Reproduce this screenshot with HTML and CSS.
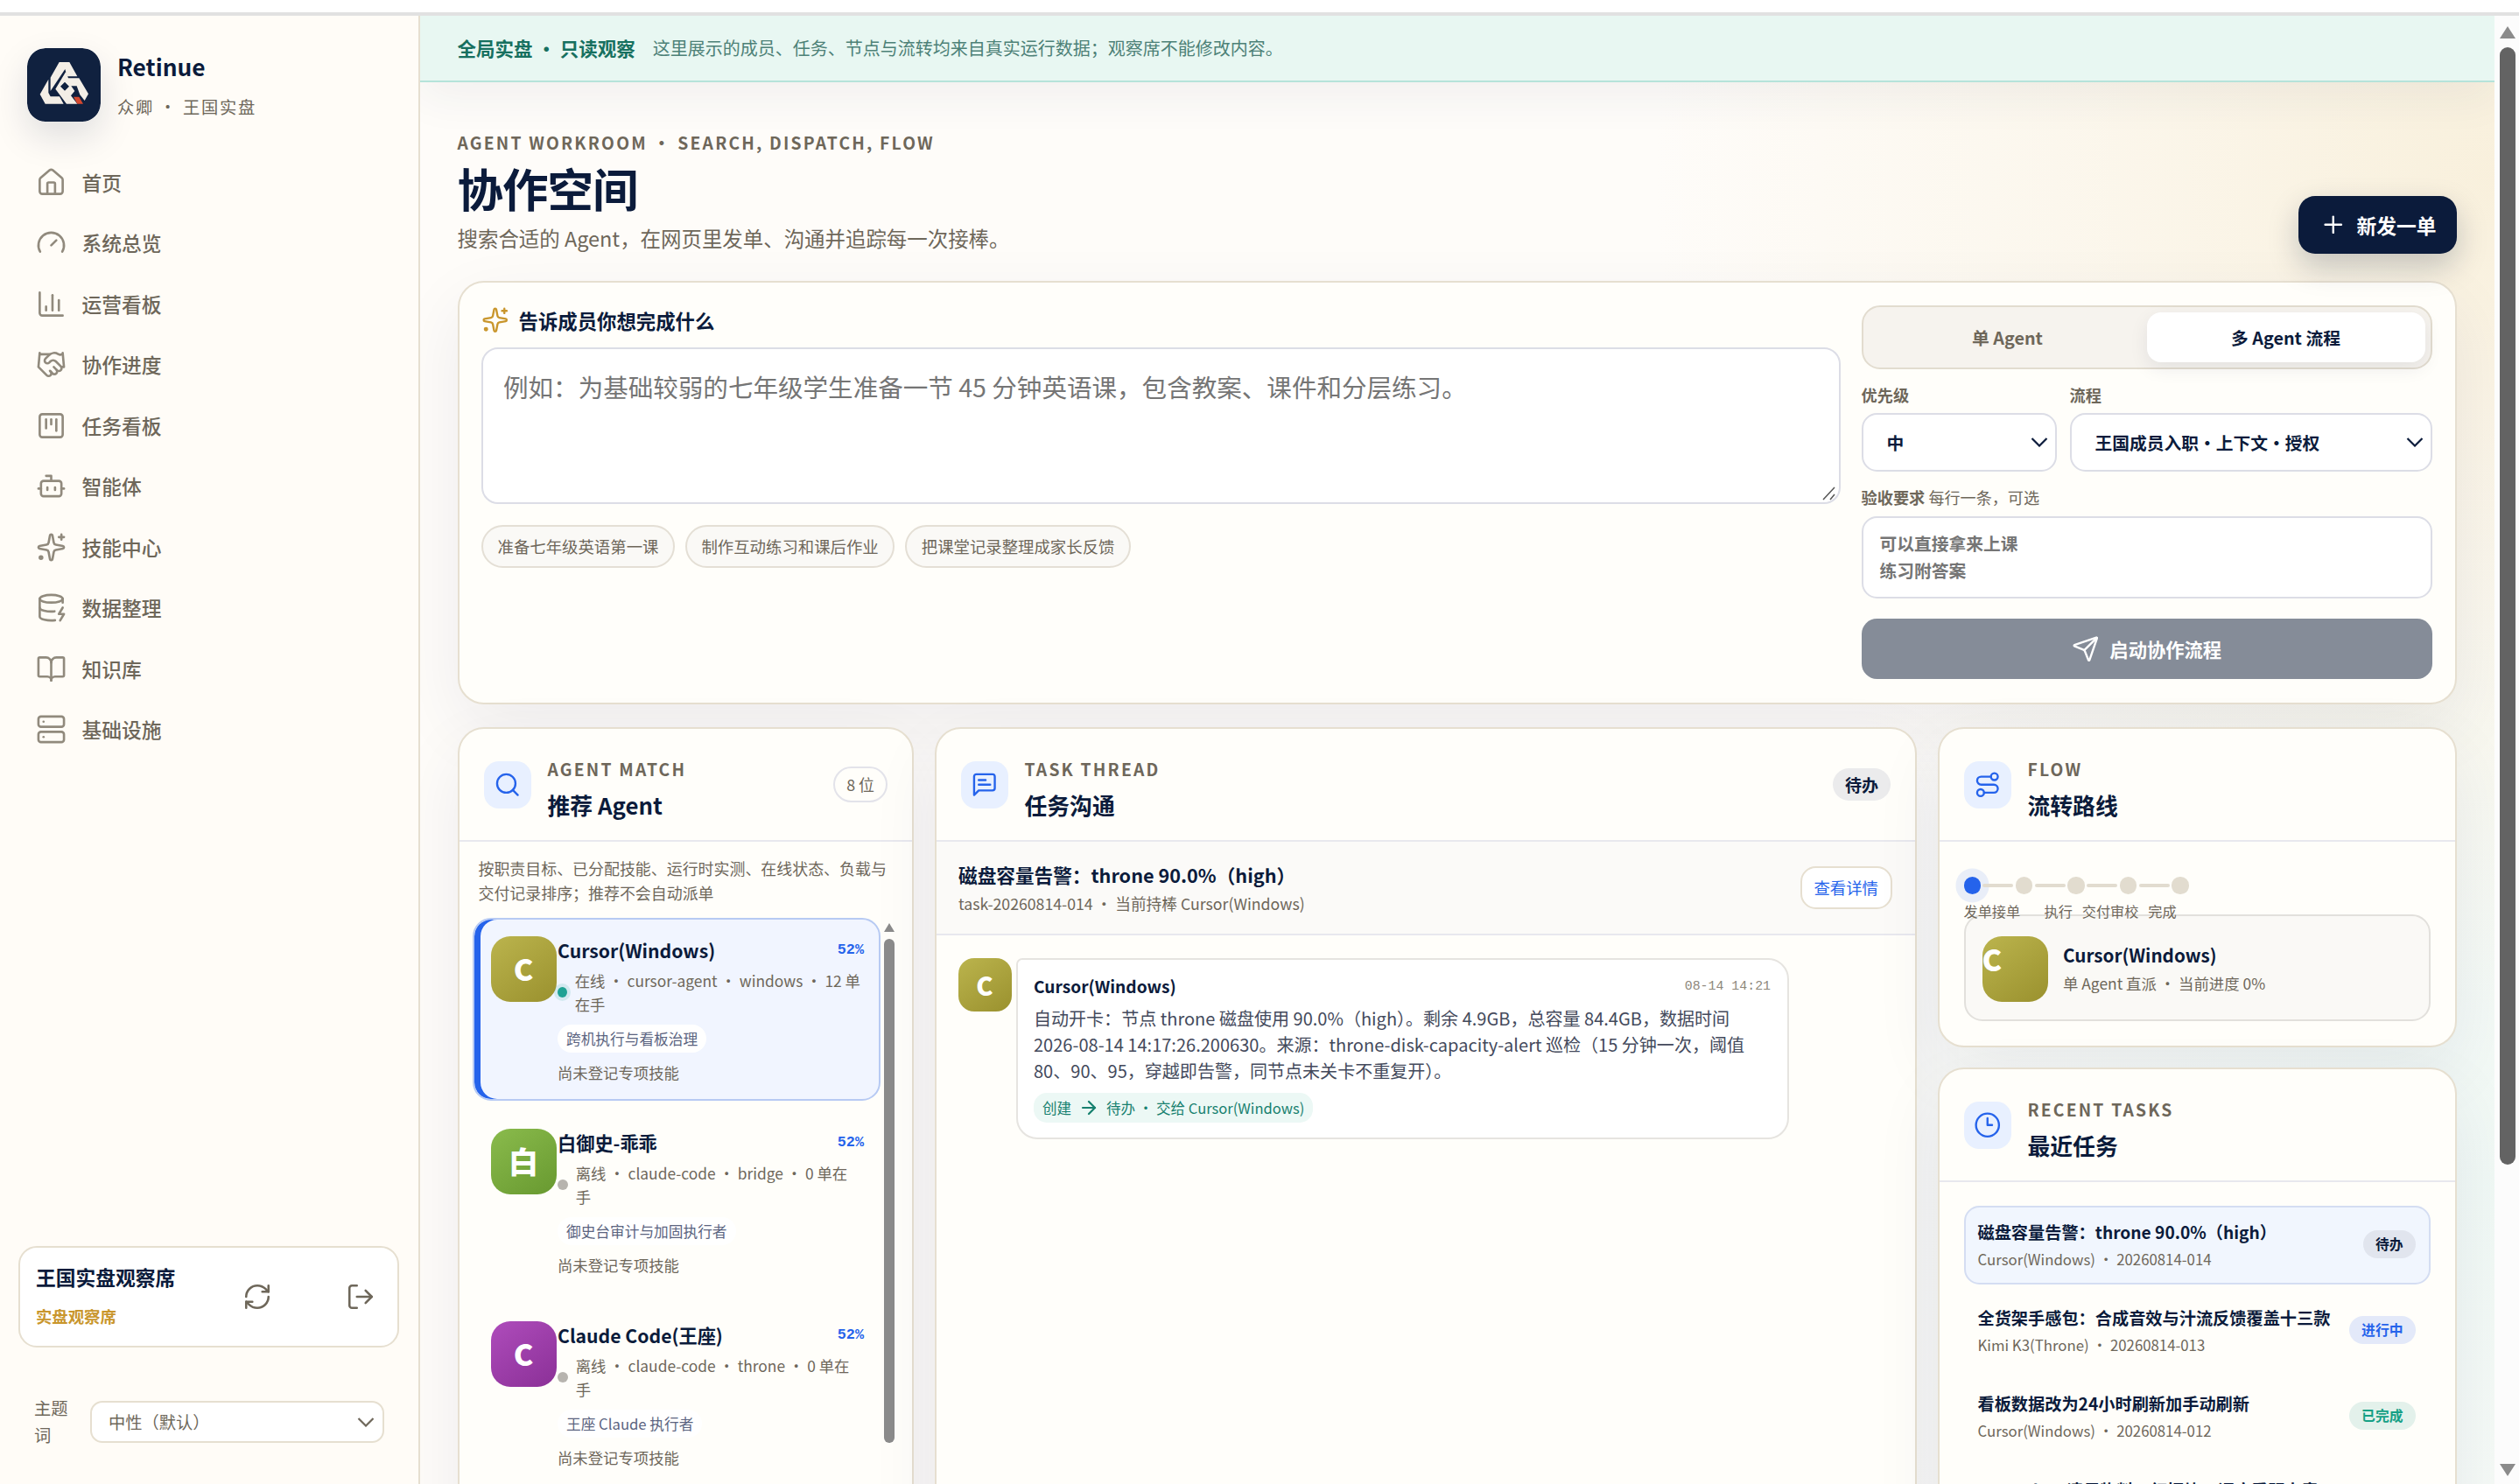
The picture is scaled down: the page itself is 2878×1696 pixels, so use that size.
FILE: index.html
```html
<!DOCTYPE html>
<html lang="zh-CN">
<head>
  <meta charset="utf-8" />
  <meta name="viewport" content="width=device-width, initial-scale=1.0">
  <title>Retinue · 协作空间</title>
  <link rel="stylesheet" href="styles.css">
</head>
<body>

  <div class="topline"></div>
  <div class="app">

    <aside class="sidebar">
      <div class="brand">
        <svg class="brand-logo" viewBox="0 0 252 252">
          <rect width="252" height="252" rx="62" fill="#10213f" />
          <g fill="#f3eee6">
            <path d="M110 48H145L172 97H137L130 72L80 147V101Z" />
            <path d="M73 107V153L80 166H111L125 191H62L44 158Z" />
            <path fill-rule="evenodd" d="M133 80L141 103H178L210 157L197 180L181 160L170 130H151L163 147L150 163L172 191H135L97 140ZM129 116L114 131L129 146L144 131Z" />
          </g>
          <path d="M159 167H178L192 191H172Z" fill="#d5492f" />
        </svg>
        <div>
          <div class="brand-name">Retinue</div>
          <div class="brand-sub">众卿 · 王国实盘</div>
        </div>
      </div>

      <nav class="nav">
        <a class="nav-item"><svg class="icon" viewBox="0 0 24 24"><path d="M15 21v-8a1 1 0 0 0-1-1h-4a1 1 0 0 0-1 1v8"/><path d="M3 10a2 2 0 0 1 .709-1.528l7-6a2 2 0 0 1 2.582 0l7 6A2 2 0 0 1 21 10v9a2 2 0 0 1-2 2H5a2 2 0 0 1-2-2z"/></svg>首页</a>
        <a class="nav-item"><svg class="icon" viewBox="0 0 24 24"><path d="m12 14 4-4"/><path d="M3.34 19a10 10 0 1 1 17.32 0"/></svg>系统总览</a>
        <a class="nav-item"><svg class="icon" viewBox="0 0 24 24"><path d="M3 3v16a2 2 0 0 0 2 2h16"/><path d="M18 17V9"/><path d="M13 17V5"/><path d="M8 17v-3"/></svg>运营看板</a>
        <a class="nav-item"><svg class="icon" viewBox="0 0 24 24"><path d="m11 17 2 2a1 1 0 1 0 3-3"/><path d="m14 14 2.500 2.500a1 1 0 1 0 3-3l-3.880-3.880a3 3 0 0 0-4.240 0l-.88.88a1 1 0 1 1-3-3l2.810-2.810a5.790 5.790 0 0 1 7.060-.87l.47.28a2 2 0 0 0 1.420.25L21 4"/><path d="m21 3 1 11h-2"/><path d="M3 3 2 14l6.500 6.500a1 1 0 1 0 3-3"/><path d="M3 4h8"/></svg>协作进度</a>
        <a class="nav-item"><svg class="icon" viewBox="0 0 24 24"><rect width="18" height="18" x="3" y="3" rx="2"/><path d="M8 7v7"/><path d="M12 7v4"/><path d="M16 7v9"/></svg>任务看板</a>
        <a class="nav-item"><svg class="icon" viewBox="0 0 24 24"><path d="M12 8V4H8"/><rect width="16" height="12" x="4" y="8" rx="2"/><path d="M2 14h2"/><path d="M20 14h2"/><path d="M15 13v2"/><path d="M9 13v2"/></svg>智能体</a>
        <a class="nav-item"><svg class="icon" viewBox="0 0 24 24"><path d="M11.017 2.814a1 1 0 0 1 1.966 0l1.051 5.558a2 2 0 0 0 1.594 1.594l5.558 1.051a1 1 0 0 1 0 1.966l-5.558 1.051a2 2 0 0 0-1.594 1.594l-1.051 5.558a1 1 0 0 1-1.966 0l-1.051-5.558a2 2 0 0 0-1.594-1.594l-5.558-1.051a1 1 0 0 1 0-1.966l5.558-1.051a2 2 0 0 0 1.594-1.594z"/><path d="M20 2v4"/><path d="M22 4h-4"/><circle cx="4" cy="20" r="1"/></svg>技能中心</a>
        <a class="nav-item"><svg class="icon" viewBox="0 0 24 24"><ellipse cx="12" cy="5" rx="9" ry="3"/><path d="M3 5v14a9 3 0 0 0 12 2.840"/><path d="M21 5v3"/><path d="m21 12-3 5h4l-3 5"/><path d="M3 12a9 3 0 0 0 11.590 2.870"/></svg>数据整理</a>
        <a class="nav-item"><svg class="icon" viewBox="0 0 24 24"><path d="M12 7v14"/><path d="M3 18a1 1 0 0 1-1-1V4a1 1 0 0 1 1-1h5a4 4 0 0 1 4 4 4 4 0 0 1 4-4h5a1 1 0 0 1 1 1v13a1 1 0 0 1-1 1h-6a3 3 0 0 0-3 3 3 3 0 0 0-3-3z"/></svg>知识库</a>
        <a class="nav-item"><svg class="icon" viewBox="0 0 24 24"><rect width="20" height="8" x="2" y="2" rx="2"/><rect width="20" height="8" x="2" y="14" rx="2"/><path d="M6 6h.01"/><path d="M6 18h.01"/></svg>基础设施</a>
      </nav>

      <div class="user-card">
        <div class="user-info">
          <div class="user-name">王国实盘观察席</div>
          <div class="user-role">实盘观察席</div>
        </div>
        <svg class="icon user-refresh" viewBox="0 0 24 24"><path d="M3 12a9 9 0 0 1 9-9 9.750 9.750 0 0 1 6.740 2.740L21 8"/><path d="M21 3v5h-5"/><path d="M21 12a9 9 0 0 1-9 9 9.750 9.750 0 0 1-6.740-2.740L3 16"/><path d="M8 16H3v5"/></svg>
        <svg class="icon" viewBox="0 0 24 24"><path d="M9 21H5a2 2 0 0 1-2-2V5a2 2 0 0 1 2-2h4"/><path d="m16 17 5-5-5-5"/><path d="M21 12H9"/></svg>
      </div>

      <div class="theme-row">
        <span class="theme-label">主题词</span>
        <div class="theme-select">中性（默认）<svg class="chevron" viewBox="0 0 20 12"><path d="M1.500 2 10 10.500 18.500 2"/></svg></div>
      </div>
    </aside>

    <main class="main">
      <div class="banner"><b>全局实盘 · 只读观察</b><span>这里展示的成员、任务、节点与流转均来自真实运行数据；观察席不能修改内容。</span></div>

      <div class="content">
        <header class="page-head">
          <div>
            <div class="eyebrow">AGENT WORKROOM · SEARCH, DISPATCH, FLOW</div>
            <h1>协作空间</h1>
            <p>搜索合适的 Agent，在网页里发单、沟通并追踪每一次接棒。</p>
          </div>
          <button class="new-btn"><svg class="icon" viewBox="0 0 24 24"><path d="M5 12h14"/><path d="M12 5v14"/></svg>新发一单</button>
        </header>

        <section class="compose">
          <div class="compose-left">
            <div class="compose-title"><svg class="icon" viewBox="0 0 24 24"><path d="M11.017 2.814a1 1 0 0 1 1.966 0l1.051 5.558a2 2 0 0 0 1.594 1.594l5.558 1.051a1 1 0 0 1 0 1.966l-5.558 1.051a2 2 0 0 0-1.594 1.594l-1.051 5.558a1 1 0 0 1-1.966 0l-1.051-5.558a2 2 0 0 0-1.594-1.594l-5.558-1.051a1 1 0 0 1 0-1.966l5.558-1.051a2 2 0 0 0 1.594-1.594z"/><path d="M20 2v4"/><path d="M22 4h-4"/><circle cx="4" cy="20" r="1"/></svg>告诉成员你想完成什么</div>
            <div class="goal-input">例如：为基础较弱的七年级学生准备一节 45 分钟英语课，包含教案、课件和分层练习。<svg class="grip" viewBox="0 0 16 16"><path d="M1 15 14 1M9 15l5-6"/></svg></div>
            <div class="chips">
              <span class="chip">准备七年级英语第一课</span>
              <span class="chip">制作互动练习和课后作业</span>
              <span class="chip">把课堂记录整理成家长反馈</span>
            </div>
          </div>
          <div class="compose-right">
            <div class="segment">
              <span>单 Agent</span>
              <span class="active">多 Agent 流程</span>
            </div>
            <div class="fields">
              <div class="field">
                <label>优先级</label>
                <div class="select">中<svg class="chevron" viewBox="0 0 20 12"><path d="M1.500 2 10 10.500 18.500 2"/></svg></div>
              </div>
              <div class="field">
                <label>流程</label>
                <div class="select">王国成员入职·上下文·授权<svg class="chevron" viewBox="0 0 20 12"><path d="M1.500 2 10 10.500 18.500 2"/></svg></div>
              </div>
            </div>
            <div class="field accept">
              <label>验收要求 <small>每行一条，可选</small></label>
              <div class="accept-input">可以直接拿来上课<br>练习附答案</div>
            </div>
            <button class="start-btn"><svg class="icon" viewBox="0 0 24 24"><path d="M14.536 21.686a.5.5 0 0 0 .937-.024l6.500-19a.496.496 0 0 0-.635-.635l-19 6.500a.5.5 0 0 0-.024.937l7.930 3.180a2 2 0 0 1 1.112 1.110z"/><path d="m21.854 2.147-10.940 10.939"/></svg>启动协作流程</button>
          </div>
        </section>

        <section class="columns">
          <!-- Agent match -->
          <div class="panel match">
            <div class="panel-head">
              <div class="panel-icon"><svg class="icon" viewBox="0 0 24 24"><path d="m21 21-4.340-4.340"/><circle cx="11" cy="11" r="8"/></svg></div>
              <div class="panel-title"><div class="eyebrow">AGENT MATCH</div><h2>推荐 Agent</h2></div>
              <span class="count">8 位</span>
            </div>
            <p class="match-note">按职责目标、已分配技能、运行时实测、在线状态、负载与交付记录排序；推荐不会自动派单</p>
            <div class="agent-scroll">
              <div class="agent-list">
                <div class="agent selected">
                  <div class="avatar olive">C</div>
                  <div class="agent-body">
                    <div class="agent-row"><b>Cursor(Windows)</b><span class="score">52%</span></div>
                    <div class="agent-state"><i class="dot online"></i><span>在线 · cursor-agent · windows · 12 单<br>在手</span></div>
                    <span class="tag">跨机执行与看板治理</span>
                    <div class="agent-skill">尚未登记专项技能</div>
                  </div>
                </div>
                <div class="agent">
                  <div class="avatar green">白</div>
                  <div class="agent-body">
                    <div class="agent-row"><b>白御史-乖乖</b><span class="score">52%</span></div>
                    <div class="agent-state"><i class="dot"></i><span>离线 · claude-code · bridge · 0 单在<br>手</span></div>
                    <span class="tag">御史台审计与加固执行者</span>
                    <div class="agent-skill">尚未登记专项技能</div>
                  </div>
                </div>
                <div class="agent">
                  <div class="avatar purple">C</div>
                  <div class="agent-body">
                    <div class="agent-row"><b>Claude Code(王座)</b><span class="score">52%</span></div>
                    <div class="agent-state"><i class="dot"></i><span>离线 · claude-code · throne · 0 单在<br>手</span></div>
                    <span class="tag">王座 Claude 执行者</span>
                    <div class="agent-skill">尚未登记专项技能</div>
                  </div>
                </div>
              </div>
              <div class="mini-bar"><i class="mini-up"></i><i class="mini-thumb"></i></div>
            </div>
          </div>

          <!-- Task thread -->
          <div class="panel thread">
            <div class="panel-head">
              <div class="panel-icon"><svg class="icon" viewBox="0 0 24 24"><path d="M21 15a2 2 0 0 1-2 2H7l-4 4V5a2 2 0 0 1 2-2h14a2 2 0 0 1 2 2z"/><path d="M13 8H7"/><path d="M17 12H7"/></svg></div>
              <div class="panel-title"><div class="eyebrow">TASK THREAD</div><h2>任务沟通</h2></div>
              <span class="status">待办</span>
            </div>
            <div class="thread-task">
              <div>
                <div class="thread-name">磁盘容量告警：throne 90.0%（high）</div>
                <div class="thread-meta">task-20260814-014 · 当前持棒 Cursor(Windows)</div>
              </div>
              <span class="detail-btn">查看详情</span>
            </div>
            <div class="message">
              <div class="avatar small olive">C</div>
              <div class="bubble">
                <div class="bubble-head"><b>Cursor(Windows)</b><time>08-14 14:21</time></div>
                <p>自动开卡：节点 throne 磁盘使用 90.0%（high）。剩余 4.9GB，总容量 84.4GB，数据时间<br>2026-08-14 14:17:26.200630。来源：throne-disk-capacity-alert 巡检（15 分钟一次，阈值<br>80、90、95，穿越即告警，同节点未关卡不重复开）。</p>
                <span class="event">创建<svg class="icon" viewBox="0 0 24 24"><path d="M5 12h14"/><path d="m12 5 7 7-7 7"/></svg>待办 · 交给 Cursor(Windows)</span>
              </div>
            </div>
          </div>

          <!-- Flow + recent tasks -->
          <div class="side">
            <div class="panel flow">
              <div class="panel-head">
                <div class="panel-icon"><svg class="icon" viewBox="0 0 24 24"><circle cx="6" cy="19" r="3"/><path d="M9 19h8.500a3.500 3.500 0 0 0 0-7h-11a3.500 3.500 0 0 1 0-7H15"/><circle cx="18" cy="5" r="3"/></svg></div>
                <div class="panel-title"><div class="eyebrow">FLOW</div><h2>流转路线</h2></div>
              </div>
              <div class="flow-body">
                <div class="steps"><i class="step now"></i><i class="line"></i><i class="step"></i><i class="line"></i><i class="step"></i><i class="line"></i><i class="step"></i><i class="line"></i><i class="step"></i></div>
                <div class="step-labels"><span>发单接单</span><span>执行</span><span>交付审校</span><span>完成</span></div>
                <div class="holder">
                  <div class="avatar corner olive">C</div>
                  <div>
                    <div class="holder-name">Cursor(Windows)</div>
                    <div class="holder-meta">单 Agent 直派 · 当前进度 0%</div>
                  </div>
                </div>
              </div>
            </div>

            <div class="panel recent">
              <div class="panel-head">
                <div class="panel-icon"><svg class="icon" viewBox="0 0 24 24"><circle cx="12" cy="12" r="10"/><path d="M12 6v6h4"/></svg></div>
                <div class="panel-title"><div class="eyebrow">RECENT TASKS</div><h2>最近任务</h2></div>
              </div>
              <div class="tasks">
                <div class="task selected">
                  <div><div class="task-name">磁盘容量告警：throne 90.0%（high）</div><div class="task-meta">Cursor(Windows) · 20260814-014</div></div>
                  <span class="pill">待办</span>
                </div>
                <div class="task">
                  <div><div class="task-name">全货架手感包：合成音效与汁流反馈覆盖十三款</div><div class="task-meta">Kimi K3(Throne) · 20260814-013</div></div>
                  <span class="pill doing">进行中</span>
                </div>
                <div class="task">
                  <div><div class="task-name">看板数据改为24小时刷新加手动刷新</div><div class="task-meta">Cursor(Windows) · 20260814-012</div></div>
                  <span class="pill done">已完成</span>
                </div>
                <div class="task">
                  <div><div class="task-name">OpenClaw 清尽物料·红招块，调度看明上章</div></div>
                </div>
              </div>
            </div>
          </div>
        </section>
      </div>
    </main>

    <div class="page-bar"><i class="bar-up"></i><i class="bar-thumb"></i><i class="bar-down"></i></div>
  </div>

</body>
</html>
```
FILE: styles.css
```css
/* --- General Setup --- */
:root {
  --navy: #0b1b3b;
  --muted: #6e675a;
  --line: #e6dfd0;
  --soft-line: #e8e8ee;
  --paper: #fffefa;
  --blue: #2563eb;
  --gold: #c9962c;
}
*, *::before, *::after {
  box-sizing: border-box;
}
body {
  margin: 0;
  width: 2878px;
  height: 1696px;
  overflow: hidden;
  display: flex;
  flex-direction: column;
  font-family: "Noto Sans CJK SC", sans-serif;
  color: var(--navy);
  background: #fff;
}
h1, h2, p {
  margin: 0;
}
button {
  font-family: inherit;
  border: none;
}
.icon {
  width: 31.5px;
  height: 31.5px;
  flex: none;
  fill: none;
  stroke: currentColor;
  stroke-width: 1.8;
  stroke-linecap: round;
  stroke-linejoin: round;
}
.chevron {
  width: 20px;
  height: 12px;
  margin-left: auto;
  flex: none;
  fill: none;
  stroke: currentColor;
  stroke-width: 2.2;
}
.topline {
  height: 18px;
  flex: none;
  border-bottom: 4px solid #e1e1e1;
}
.app {
  display: flex;
  height: 1678px;
}

/* --- Sidebar --- */
.sidebar {
  width: 480px;
  flex: none;
  display: flex;
  flex-direction: column;
  background: #fffcf7;
  border-right: 2px solid var(--line);
}
.brand {
  display: flex;
  gap: 19px;
  padding: 37px 0 0 31px;
}
.brand-logo {
  width: 84px;
  height: 84px;
  border-radius: 21px;
  box-shadow: 0 17px 42px rgba(11, 27, 59, 0.13);
}
.brand-name {
  font-size: 26.3px;
  font-weight: 700;
  line-height: 40px;
  margin-top: 1px;
}
.brand-sub {
  font-size: 19.25px;
  line-height: 32px;
  letter-spacing: 1.75px;
  margin-top: 10px;
  color: var(--muted);
}
.nav {
  display: flex;
  flex-direction: column;
  gap: 3.5px;
  padding: 36.3px 0 0 40.5px;
}
.nav-item {
  display: flex;
  align-items: center;
  gap: 18px;
  height: 66px;
  font-size: 22.75px;
  font-weight: 500;
  color: var(--muted);
}
.nav-item .icon {
  width: 35px;
  height: 35px;
  color: #918a7d;
}
.user-card {
  display: flex;
  align-items: center;
  height: 116px;
  margin: auto 22px 0 21px;
  padding: 0 25px 0 18px;
  background: #fff;
  border: 2px solid var(--line);
  border-radius: 21px;
  color: var(--muted);
}
.user-card .icon {
  width: 34px;
  height: 34px;
}
.user-info {
  width: 236px;
  margin-top: -4px;
}
.user-name {
  font-size: 22.75px;
  font-weight: 700;
  line-height: 36px;
  color: var(--navy);
}
.user-role {
  font-size: 18.375px;
  font-weight: 700;
  line-height: 30px;
  margin-top: 11px;
  color: var(--gold);
}
.user-refresh {
  margin-right: 84px;
}
.theme-row {
  display: flex;
  align-items: center;
  margin: 54px 39px 40px 39px;
  color: var(--muted);
  font-size: 19.25px;
}
.theme-label {
  width: 45px;
  line-height: 31px;
  margin-right: 19px;
}
.theme-select {
  display: flex;
  align-items: center;
  width: 336px;
  height: 48px;
  padding: 0 9px 0 19px;
  background: #fff;
  border: 2px solid var(--line);
  border-radius: 14px;
}

/* --- Main --- */
.main {
  flex: 1;
  min-width: 0;
  overflow: hidden;
  background:
    radial-gradient(circle at 100% 11%, rgba(247, 237, 213, 0.8), rgba(247, 237, 213, 0.35) 480px, rgba(247, 237, 213, 0) 960px),
    radial-gradient(circle at 100% 80%, rgba(232, 246, 242, 0.65), rgba(232, 246, 242, 0) 900px),
    #fefcf9;
}
.banner {
  position: relative;
  height: 76px;
  display: flex;
  align-items: center;
  padding: 0 0 2px 42.5px;
  gap: 20px;
  font-size: 20px;
  color: #4d8177;
  background: #e8f7f2;
  border-bottom: 2px solid #b5e3da;
  box-shadow: 0 18px 50px rgba(40, 50, 80, 0.06);
}
.banner b {
  font-size: 21.5px;
  color: #17705f;
}
.content {
  padding: 55px 43.5px 0 42.5px;
}
.eyebrow {
  font-size: 19.25px;
  font-weight: 700;
  letter-spacing: 2.2px;
  line-height: 30px;
  color: var(--muted);
}
.page-head {
  display: flex;
  justify-content: space-between;
  align-items: flex-end;
  height: 143px;
}
.page-head .eyebrow {
  margin-top: -1px;
}
.page-head h1 {
  font-size: 52.5px;
  line-height: 60px;
  letter-spacing: -1px;
  margin-top: 6px;
}
.page-head p {
  font-size: 23.45px;
  line-height: 36px;
  margin: 10px 0 2px;
  color: var(--muted);
}
.new-btn {
  display: flex;
  align-items: center;
  gap: 11.5px;
  height: 66px;
  width: 181px;
  padding: 0 0 0 24px;
  margin-bottom: 2px;
  border-radius: 19px;
  color: #fff;
  background: var(--navy);
  font-size: 22.75px;
  font-weight: 700;
  white-space: nowrap;
  box-shadow: 0 14px 35px rgba(11, 27, 59, 0.22);
}

/* --- Compose --- */
.compose,
.panel {
  background: var(--paper);
  border: 2px solid var(--line);
  border-radius: 30px;
  box-shadow: 0 28px 80px rgba(30, 35, 80, 0.07);
}
.compose {
  display: flex;
  gap: 23.5px;
  height: 484px;
  margin-top: 29px;
  padding: 26px 26px 26px 25.5px;
}
.compose-left {
  flex: 1;
}
.compose-title {
  display: flex;
  align-items: center;
  gap: 11px;
  height: 34px;
  font-size: 22.4px;
  font-weight: 700;
}
.compose-title .icon {
  color: var(--gold);
}
.goal-input {
  position: relative;
  height: 179px;
  margin-top: 14px;
  padding: 19px 23px;
  font-size: 28.55px;
  line-height: 48px;
  color: #757575;
  background: #fff;
  border: 2px solid #dcdde6;
  border-radius: 19px;
}
.grip {
  position: absolute;
  right: 3px;
  bottom: 2px;
  width: 16px;
  height: 16px;
  fill: none;
  stroke: #555;
  stroke-width: 1.5;
}
.chips {
  display: flex;
  gap: 12px;
  margin-top: 24px;
}
.chip {
  display: flex;
  align-items: center;
  height: 49px;
  padding: 0 16.5px 2px;
  font-size: 18.4px;
  color: var(--muted);
  background: #faf9f6;
  border: 2px solid #e4dfd5;
  border-radius: 25px;
}
.compose-right {
  width: 652px;
}
.segment {
  display: flex;
  height: 72.5px;
  padding: 6px;
  background: #f6f3ee;
  border: 2px solid #e2dccf;
  border-radius: 21px;
}
.segment span {
  flex: 1;
  display: flex;
  align-items: center;
  justify-content: center;
  font-size: 19.8px;
  font-weight: 600;
  color: var(--muted);
}
.segment .active {
  color: var(--navy);
  background: #fff;
  border-radius: 16px;
  box-shadow: 0 7px 21px rgba(11, 27, 59, 0.08);
}
.fields {
  display: flex;
  gap: 15px;
  margin-top: 15px;
}
.field label {
  display: block;
  font-size: 18.2px;
  font-weight: 600;
  line-height: 29px;
  margin-bottom: 6.5px;
  color: var(--muted);
}
.field small {
  font-size: 18.1px;
  font-weight: 400;
}
.fields .field:first-child {
  width: 223px;
}
.fields .field:last-child {
  flex: 1;
}
.select {
  display: flex;
  align-items: center;
  height: 67px;
  padding: 0 8px 1px 27px;
  font-size: 19.75px;
  font-weight: 700;
  background: #fff;
  border: 2px solid #dcdde6;
  border-radius: 17.5px;
}
.accept {
  margin-top: 15px;
}
.accept-input {
  height: 94px;
  padding: 13px 19px;
  font-size: 19.75px;
  font-weight: 600;
  line-height: 31px;
  color: #757575;
  background: #fff;
  border: 2px solid #dcdde6;
  border-radius: 17.5px;
}
.start-btn {
  display: flex;
  align-items: center;
  justify-content: center;
  gap: 12px;
  width: 100%;
  height: 69.5px;
  margin-top: 23px;
  font-size: 21.3px;
  font-weight: 700;
  color: #fff;
  background: #858c98;
  border-radius: 17.5px;
}

/* --- Panels --- */
.columns {
  display: flex;
  align-items: flex-start;
  gap: 23.5px;
  margin-top: 26px;
}
.panel-head {
  display: flex;
  align-items: center;
  height: 129px;
  padding: 0 28px;
  border-bottom: 2px solid var(--soft-line);
}
.panel-icon {
  display: flex;
  align-items: center;
  justify-content: center;
  width: 54px;
  height: 54px;
  border-radius: 17px;
  color: var(--blue);
  background: #e8f0ff;
}
.panel-title {
  margin: 11px auto 0 19px;
}
.panel-title h2 {
  font-size: 25.8px;
  line-height: 42px;
  margin-top: 5px;
}
.count {
  height: 41px;
  line-height: 37px;
  padding: 0 13px;
  font-size: 17.9px;
  color: var(--muted);
  border: 2px solid #e3e3ea;
  border-radius: 21px;
}
.status {
  height: 37px;
  line-height: 37px;
  padding: 0 14px;
  font-size: 19px;
  font-weight: 700;
  background: #ebebec;
  border-radius: 19px;
}
.avatar {
  display: flex;
  align-items: center;
  justify-content: center;
  flex: none;
  width: 75px;
  height: 75px;
  border-radius: 22px;
  font-size: 34px;
  font-weight: 900;
  line-height: 1;
  color: #fff;
}
.avatar.olive {
  background: linear-gradient(145deg, #bbb44d, #9a912e);
}
.avatar.green {
  background: linear-gradient(145deg, #8abb4c, #689930);
}
.avatar.purple {
  background: linear-gradient(145deg, #ae4cbb, #8b3097);
}
.avatar.small {
  width: 61px;
  height: 61px;
  border-radius: 18px;
  font-size: 29px;
}
.avatar.corner {
  align-items: flex-start;
  justify-content: flex-start;
  padding-top: 9px;
}

/* --- Agent match --- */
.match {
  width: 521.5px;
  height: 1000px;
}
.match-note {
  padding: 17px 20px 0 22px;
  font-size: 17.95px;
  line-height: 27.6px;
  color: var(--muted);
}
.agent-scroll {
  display: flex;
  margin-top: 14.8px;
  padding-left: 15.5px;
}
.agent-list {
  display: flex;
  flex-direction: column;
  gap: 10.5px;
  width: 466px;
}
.agent {
  display: flex;
  gap: 1.5px;
  height: 209.5px;
  padding: 19px 17px 0 18.5px;
  border: 2px solid transparent;
  border-radius: 21px;
}
.agent.selected {
  background: #f1f5ff;
  border-color: #b7caf3;
  box-shadow: inset 7px 0 0 var(--blue);
}
.agent-body {
  flex: 1;
  margin-top: -1px;
}
.agent-row {
  display: flex;
  justify-content: space-between;
  align-items: center;
  height: 34px;
  font-size: 21.2px;
}
.score {
  font-family: "Liberation Mono", monospace;
  font-size: 16.8px;
  font-weight: 700;
  color: var(--blue);
}
.agent-state {
  display: flex;
  align-items: center;
  gap: 8.7px;
  margin-top: 4px;
  font-size: 17.36px;
  line-height: 27px;
  white-space: nowrap;
  color: var(--muted);
}
.dot {
  width: 12px;
  height: 12px;
  flex: none;
  border-radius: 50%;
  background: #b7b4ae;
}
.dot.online {
  width: 11px;
  height: 12px;
  background: #1fa294;
  box-shadow: 0 0 0 4px rgba(31, 162, 148, 0.14);
}
.tag {
  display: inline-block;
  height: 32px;
  margin-top: 10px;
  padding: 0 10px;
  font-size: 16.7px;
  line-height: 32px;
  color: #5b6480;
  background: #fff;
  border-radius: 16px;
  vertical-align: top;
}
.agent-skill {
  margin-top: 9.5px;
  font-size: 17.36px;
  line-height: 27px;
  color: var(--muted);
}
.mini-bar {
  display: flex;
  flex-direction: column;
  align-items: center;
  width: 20px;
  height: 660px;
  padding-top: 6px;
}
.mini-up {
  border: 6px solid transparent;
  border-top: none;
  border-bottom: 10px solid #8b8b8b;
}
.mini-thumb {
  width: 12px;
  height: 576px;
  margin-top: 8px;
  border-radius: 6px;
  background: #8b8b8b;
}

/* --- Thread --- */
.thread {
  flex: 1;
  height: 1000px;
}
.thread-task {
  display: flex;
  align-items: center;
  justify-content: space-between;
  height: 107px;
  padding: 0 26.5px 0 25.5px;
  background: #fbfaf8;
  border-bottom: 2px solid var(--soft-line);
}
.thread-name {
  font-size: 21.65px;
  font-weight: 600;
  line-height: 36px;
}
.thread-meta {
  font-size: 17.7px;
  line-height: 29px;
  color: var(--muted);
}
.detail-btn {
  height: 49px;
  padding: 0 13.5px;
  font-size: 18.4px;
  font-weight: 400;
  line-height: 45px;
  color: var(--blue);
  background: #fff;
  border: 2px solid var(--line);
  border-radius: 17.5px;
}
.message {
  display: flex;
  gap: 5px;
  padding: 26px 0 0 25px;
}
.bubble {
  width: 883px;
  height: 207px;
  padding: 13.5px 18.5px;
  background: #fff;
  border: 2px solid #e6e4e0;
  border-radius: 7px 24px 24px 24px;
}
.bubble-head {
  display: flex;
  justify-content: space-between;
  align-items: center;
  height: 33px;
  font-size: 19.15px;
}
.bubble time {
  font-family: "Liberation Mono", monospace;
  font-size: 14.9px;
  color: #8d877b;
}
.bubble p {
  margin-top: 5px;
  font-size: 20.05px;
  line-height: 30.2px;
  color: #444a5c;
}
.event {
  display: inline-flex;
  align-items: center;
  height: 34px;
  margin-top: 10px;
  padding: 0 10px;
  font-size: 16.55px;
  color: #17806f;
  background: #ecf8f5;
  border-radius: 15px;
}
.event .icon {
  width: 24px;
  height: 24px;
  margin: 0 8px;
  stroke-width: 2.2;
}

/* --- Flow --- */
.side {
  width: 593px;
}
.flow {
  height: 365.500px;
}
.flow-body {
  padding: 40px 28px 0;
}
.steps {
  display: flex;
  align-items: center;
  gap: 2.6px;
  height: 20px;
}
.step {
  width: 19.25px;
  height: 19.25px;
  border-radius: 50%;
  background: #e2dccf;
}
.step.now {
  background: var(--blue);
  box-shadow: 0 0 0 9.500px rgba(37, 99, 235, 0.1);
}
.line {
  position: relative;
  width: 35px;
  height: 4px;
  border-radius: 2px;
  background: #e2dccf;
}
.step-labels {
  position: relative;
  display: flex;
  gap: 10.8px;
  height: 26px;
  margin: 6px 0 -9px;
  font-size: 16.2px;
  line-height: 26px;
  color: var(--muted);
}
.step-labels span:first-child {
  margin-right: 16.5px;
}
.holder {
  display: flex;
  align-items: center;
  gap: 17.5px;
  height: 122px;
  padding: 2px 0 0 19px;
  background: #faf9f6;
  border: 2px solid #e2e0dc;
  border-radius: 21px;
}
.holder-name {
  font-size: 20.65px;
  font-weight: 600;
  line-height: 36px;
  margin-top: -3px;
}
.holder-meta {
  font-size: 17.4px;
  line-height: 30px;
  color: var(--muted);
}

/* --- Recent tasks --- */
.recent {
  height: 620px;
  margin-top: 23.500px;
}
.tasks {
  display: flex;
  flex-direction: column;
  gap: 8px;
  padding: 26.5px 28px 0;
}
.task {
  display: flex;
  align-items: center;
  justify-content: space-between;
  height: 90px;
  padding: 0 15px 1px 14px;
  border: 2px solid transparent;
  border-radius: 17.5px;
}
.task:last-child {
  align-items: flex-start;
  padding-top: 12px;
}
.task.selected {
  background: #f1f6fe;
  border-color: #d4ddf2;
}
.task-name {
  font-size: 19.2px;
  font-weight: 600;
  line-height: 34px;
}
.task-meta {
  font-size: 16.8px;
  line-height: 29px;
  color: var(--muted);
}
.pill {
  height: 32px;
  padding: 0 14px;
  font-size: 15.8px;
  font-weight: 600;
  line-height: 31px;
  background: #e1e5ee;
  border-radius: 16px;
}
.pill.doing {
  color: var(--blue);
  background: #e3e9f9;
}
.pill.done {
  color: #16a085;
  background: #e3f1eb;
}

/* --- Page scrollbar --- */
.page-bar {
  width: 28px;
  flex: none;
  display: flex;
  flex-direction: column;
  align-items: center;
  padding: 12px 0 9px 2px;
  background: #fcfcfc;
}
.bar-up {
  border: 9px solid transparent;
  border-top: none;
  border-bottom: 14px solid #8b8b8b;
}
.bar-thumb {
  width: 18px;
  height: 1277px;
  margin-top: 10px;
  border-radius: 9px;
  background: #636363;
}
.bar-down {
  margin-top: auto;
  border: 9px solid transparent;
  border-bottom: none;
  border-top: 14px solid #8b8b8b;
}
```
